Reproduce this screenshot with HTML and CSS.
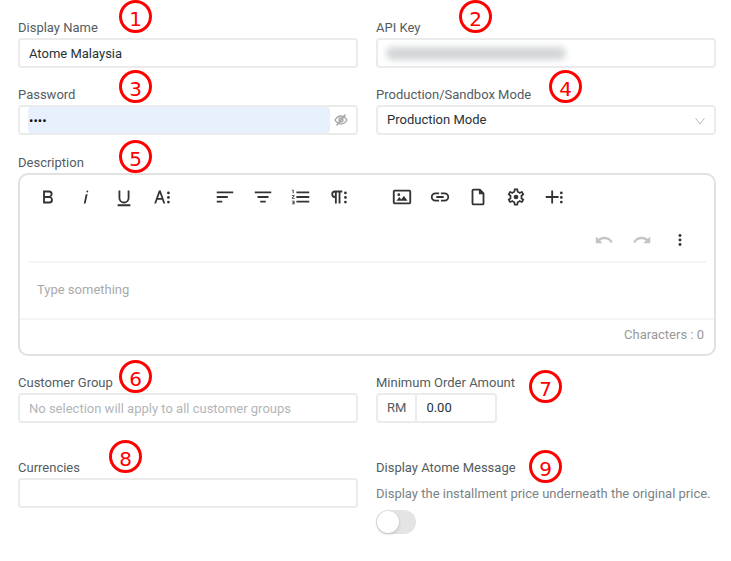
FILE: index.html
```
<!DOCTYPE html>
<html lang="en">
<head>
    <meta charset="UTF-8">
    <meta name="viewport" content="width=device-width, initial-scale=1.0">
    <title>Atome Payment Settings</title>
    <link rel="stylesheet" href="styles.css">
</head>
<body>
    <form class="settings">
        <div class="field">
            <label class="label" for="display_name">Display Name</label>
            <input class="input" type="text" id="display_name" value="Atome Malaysia">
            <span class="badge badge-name">1</span>
        </div>

        <div class="field">
            <label class="label" for="api_key">API Key</label>
            <div class="masked">
                <input class="input" type="text" id="api_key">
                <span class="smudge"></span>
            </div>
            <span class="badge badge-key">2</span>
        </div>

        <div class="field">
            <label class="label" for="password">Password</label>
            <div class="input password">
                <input class="password-input" type="password" id="password" value="pass">
                <button class="eye" type="button" aria-label="Show password">
                    <svg viewBox="0 0 14 14" width="14" height="14" fill="none" stroke="currentColor" stroke-width="1.300">
                        <path d="M1 7q2.500-4 6-4t6 4q-2.500 4-6 4t-6-4z"/>
                        <circle cx="7" cy="7" r="2"/>
                        <path d="M2.500 12.500l9-11"/>
                    </svg>
                </button>
            </div>
            <span class="badge badge-password">3</span>
        </div>

        <div class="field">
            <label class="label" for="mode">Production/Sandbox Mode</label>
            <div class="select">
                <select class="input" id="mode">
                    <option>Production Mode</option>
                    <option>Sandbox Mode</option>
                </select>
                <svg class="arrow" viewBox="0 0 10 10" width="10" height="10" fill="none" stroke="currentColor">
                    <path d="M0.500 2l4.500 6 4.500-6"/>
                </svg>
            </div>
            <span class="badge badge-mode">4</span>
        </div>

        <div class="field wide">
            <label class="label" for="description">Description</label>
            <div class="editor">
                <div class="toolbar">
                    <div class="tools">
                        <button class="tool" type="button" aria-label="Bold">
                            <svg viewBox="0 0 24 24"><path d="M15.250,11.800h0A3.680,3.680,0,0,0,17,9a3.930,3.930,0,0,0-3.860-4H6.650V19h7a3.740,3.740,0,0,0,3.700-3.780V15.100A3.640,3.640,0,0,0,15.250,11.800ZM8.650,7h4.200a2.090,2.090,0,0,1,2,1.300,2.090,2.090,0,0,1-1.370,2.610,2.230,2.230,0,0,1-.63.09H8.650Zm4.600,10H8.650V13h4.600a2.090,2.090,0,0,1,2,1.300,2.090,2.090,0,0,1-1.370,2.610A2.230,2.230,0,0,1,13.250,17Z"/></svg>
                        </button>
                        <button class="tool" type="button" aria-label="Italic">
                            <svg viewBox="0 0 24 24"><path d="M11.760,9h2l-2.200,10h-2Zm1.680-4a1,1,0,1,0,1,1,1,1,0,0,0-1-1Z"/></svg>
                        </button>
                        <button class="tool" type="button" aria-label="Underline">
                            <svg viewBox="0 0 24 24"><path d="M5 20h14v2H5zM6 5v8a6 6 0 0 0 12 0V5h-2v8a4 4 0 0 1-8 0V5z"/></svg>
                        </button>
                        <button class="tool" type="button" aria-label="More text">
                            <svg viewBox="0 0 24 24"><path d="M13.550,19h2l-5-14h-2l-5,14h2l1.400-4h5.100Zm-5.900-6,1.900-5.200L11.450,13Z"/><circle cx="19" cy="7.500" r="1.500"/><circle cx="19" cy="12.500" r="1.500"/><circle cx="19" cy="17.500" r="1.500"/></svg>
                        </button>
                    </div>
                    <div class="tools">
                        <button class="tool" type="button" aria-label="Align left">
                            <svg viewBox="0 0 24 24"><path d="M3 6h18v2H3zM3 11h12v2H3zM3 16h6v2H3z"/></svg>
                        </button>
                        <button class="tool" type="button" aria-label="Align center">
                            <svg viewBox="0 0 24 24"><path d="M3 6h18v2H3zM6 11h12v2H6zM9 16h6v2H9z"/></svg>
                        </button>
                        <button class="tool" type="button" aria-label="Ordered list">
                            <svg viewBox="0 0 24 24"><path d="M2 17h2v.5H3v1h1v.5H2v1h3v-4H2v1zm1-9h1V4H2v1h1v3zm-1 3h1.800L2 13.100v.9h3v-1H3.200L5 10.900V10H2v1zM7 6h14v2H7zM7 11h14v2H7zM7 16h14v2H7z"/></svg>
                        </button>
                        <button class="tool" type="button" aria-label="More paragraph">
                            <svg viewBox="0 0 24 24"><path d="M7.680 5a4 4 0 0 0-.110 8v6h2V7h2v12h2V7h2V5zM5.530 9a2 2 0 0 1 2-2v4a2 2 0 0 1-2-2z"/><circle cx="19" cy="7.500" r="1.500"/><circle cx="19" cy="12.500" r="1.500"/><circle cx="19" cy="17.500" r="1.500"/></svg>
                        </button>
                    </div>
                    <div class="tools">
                        <button class="tool" type="button" aria-label="Insert image">
                            <svg viewBox="0 0 24 24"><path d="M14.200,11l3.800,5H6l3-3.900l2.100,2.700L14,11zM8.500,11a1.500 1.500 0 1 0 0-3a1.500 1.500 0 0 0 0 3zM22,6v12a2 2 0 0 1-2,2H4a2 2 0 0 1-2-2V6a2 2 0 0 1 2-2h16a2 2 0 0 1 2 2zM20,6H4v12h16z"/></svg>
                        </button>
                        <button class="tool" type="button" aria-label="Insert link">
                            <svg viewBox="0 0 24 24"><path d="M11,17H7A5,5,0,0,1,7,7h4V9H7a3,3,0,0,0,0,6h4ZM17,7H13V9h4a3,3,0,0,1,0,6H13v2h4A5,5,0,0,0,17,7Zm-1,4H8v2h8Z"/></svg>
                        </button>
                        <button class="tool" type="button" aria-label="Insert file">
                            <svg viewBox="0 0 24 24"><path fill-rule="evenodd" d="M7 3a2 2 0 0 0-2 2v14a2 2 0 0 0 2 2h10a2 2 0 0 0 2-2V7.600L14.400 3zM17 19H7V5h6v4h4z"/></svg>
                        </button>
                        <button class="tool" type="button" aria-label="Settings">
                            <svg viewBox="-1 -1 26 26"><path d="M19.430 12.980c.04-.32.07-.64.07-.98s-.03-.66-.07-.98l2.110-1.650c.19-.15.24-.42.12-.64l-2-3.460c-.09-.16-.26-.25-.44-.25-.06 0-.12.01-.17.03l-2.490 1c-.52-.4-1.080-.73-1.690-.98l-.38-2.650C14.460 2.180 14.250 2 14 2h-4c-.25 0-.46.18-.49.42l-.38 2.650c-.61.25-1.170.59-1.690.98l-2.490-1c-.06-.02-.12-.03-.18-.03-.17 0-.34.09-.43.25l-2 3.460c-.13.22-.07.49.12.64l2.110 1.650c-.04.32-.07.65-.07.98s.03.66.07.98l-2.110 1.650c-.19.15-.24.42-.12.64l2 3.460c.09.16.26.25.44.25.06 0 .12-.01.17-.03l2.490-1c.52.4 1.080.73 1.690.98l.38 2.650c.03.24.24.42.49.42h4c.25 0 .46-.18.49-.42l.38-2.650c.61-.25 1.170-.59 1.690-.98l2.490 1c.06.02.12.03.18.03.17 0 .34-.09.43-.25l2-3.460c.12-.22.07-.49-.12-.64l-2.110-1.650zm-1.980-1.710c.04.31.05.52.05.73 0 .21-.02.43-.05.73l-.14 1.130.89.7 1.080.84-.7 1.210-1.270-.51-1.040-.42-.9.68c-.43.32-.84.56-1.250.73l-1.060.43-.16 1.130-.2 1.350h-1.400l-.19-1.350-.16-1.130-1.060-.43c-.43-.18-.83-.41-1.230-.71l-.91-.7-1.060.43-1.270.51-.7-1.210 1.080-.84.89-.7-.14-1.130c-.03-.31-.05-.54-.05-.74s.02-.43.05-.73l.14-1.130-.89-.7-1.080-.84.7-1.210 1.270.51 1.040.42.9-.68c.43-.32.84-.56 1.250-.73l1.060-.43.16-1.130.2-1.350h1.390l.19 1.350.16 1.130 1.060.43c.43.18.83.41 1.230.71l.91.7 1.060-.43 1.270-.51.7 1.210-1.070.85-.89.7.14 1.130z"/><circle cx="12" cy="12" r="2.800"/></svg>
                        </button>
                        <button class="tool" type="button" aria-label="More rich content">
                            <svg viewBox="0 0 24 24"><path d="M9 5h2v6h6v2h-6v6H9v-6H3v-2h6z"/><circle cx="20" cy="7.500" r="1.500"/><circle cx="20" cy="12.500" r="1.500"/><circle cx="20" cy="17.500" r="1.500"/></svg>
                        </button>
                    </div>
                    <div class="tools tools-right">
                        <button class="tool" type="button" aria-label="Undo" disabled>
                            <svg viewBox="0 0 24 24"><path d="M13 8.500c-2.700 0-5 .7-7 2.200L3 8.500v7h7.500l-2.700-2.800c1.500-1 3.200-1.500 5.200-1.500 3 0 5.200 1.600 6.500 4l2-.8C19.900 10.800 17 8.500 13 8.500z"/></svg>
                        </button>
                        <button class="tool" type="button" aria-label="Redo" disabled>
                            <svg viewBox="0 0 24 24"><path d="M11 8.500c2.700 0 5 .7 7 2.200l3-2.200v7h-7.500l2.700-2.800c-1.500-1-3.200-1.500-5.200-1.500-3 0-5.200 1.600-6.500 4l-2-.8C4.100 10.800 7 8.500 11 8.500z"/></svg>
                        </button>
                        <button class="tool" type="button" aria-label="More">
                            <svg viewBox="0 0 24 24"><circle cx="12" cy="7" r="1.600"/><circle cx="12" cy="12" r="1.600"/><circle cx="12" cy="17" r="1.600"/></svg>
                        </button>
                    </div>
                </div>
                <textarea class="content" id="description" rows="1" placeholder="Type something"></textarea>
                <div class="counter">Characters : 0</div>
            </div>
            <span class="badge badge-description">5</span>
        </div>

        <div class="field">
            <label class="label" for="customer_group">Customer Group</label>
            <input class="input" type="text" id="customer_group" placeholder="No selection will apply to all customer groups">
            <span class="badge badge-group">6</span>
        </div>

        <div class="field">
            <label class="label" for="min_amount">Minimum Order Amount</label>
            <div class="input amount">
                <span class="currency">RM</span>
                <input class="amount-input" type="text" id="min_amount" value="0.00">
            </div>
            <span class="badge badge-amount">7</span>
        </div>

        <div class="field last">
            <label class="label" for="currencies">Currencies</label>
            <input class="input" type="text" id="currencies">
            <span class="badge badge-currencies">8</span>
        </div>

        <div class="field last">
            <label class="label" for="message">Display Atome Message</label>
            <p class="help">Display the installment price underneath the original price.</p>
            <input class="switch" type="checkbox" id="message">
            <span class="badge badge-message">9</span>
        </div>
    </form>
</body>
</html>
```
FILE: styles.css
```
* {
    box-sizing: border-box;
}

body, input, select, textarea, button {
    font-family: Roboto, 'Liberation Sans', sans-serif;
    font-size: 13px;
    line-height: 20px;
}

body {
    margin: 0;
    color: #535c61;
    background-color: #fff;
}

button {
    padding: 0;
    border: 0;
    background: none;
    cursor: pointer;
}

.settings {
    display: grid;
    grid-template-columns: 1fr 1fr;
    gap: 17px 18px;
    padding: 18px 15px 24px 18px;
}

.field {
    position: relative;
    min-width: 0;
}

.wide {
    grid-column: 1 / -1;
    margin-top: 1px;
}

.last {
    margin-top: 18px;
}

.label {
    display: block;
}

.input {
    display: block;
    width: 100%;
    height: 30px;
    padding: 0 9px;
    border: 2px solid #ebebeb;
    border-radius: 4px;
    color: #263238;
    background-color: #fff;
    outline: none;
}

::placeholder {
    color: #b2b6b8;
    opacity: 1;
}

/* API key is hidden behind a smudge */
.masked, .select {
    position: relative;
}

.smudge {
    position: absolute;
    top: 9px;
    left: 10px;
    width: 180px;
    height: 13px;
    border-radius: 6px;
    background-color: #d3d6d8;
    filter: blur(3px);
}

.password {
    display: flex;
    align-items: center;
    padding: 0 8px;
}

.password-input {
    flex: 1;
    min-width: 0;
    height: 26px;
    padding: 0 1px;
    border: 0;
    border-radius: 3px;
    color: #111;
    background-color: #e8f0fe;
    outline: none;
}

.eye {
    display: flex;
    margin-left: 4px;
    color: #a5a5a5;
}

select.input {
    appearance: none;
}

.arrow {
    position: absolute;
    top: 11px;
    right: 11px;
    color: #bbb;
    pointer-events: none;
}

.editor {
    border: 2px solid #e1e1e1;
    border-radius: 10px;
}

.toolbar {
    display: flex;
    flex-wrap: wrap;
    column-gap: 25px;
    margin: 0 8px;
    padding-left: 1px;
    border-bottom: 2px solid #f5f5f5;
}

.tools {
    display: flex;
}

.tools-right {
    flex-basis: 100%;
    justify-content: flex-end;
    padding-right: 7px;
}

.tool {
    display: flex;
    align-items: center;
    justify-content: center;
    width: 38px;
    height: 43px;
    color: #333;
}

.tool svg {
    width: 22px;
    height: 22px;
    fill: currentColor;
}

.tool:disabled {
    color: #c4c4c4;
}

.content {
    display: block;
    width: 100%;
    height: 55px;
    padding: 17px;
    border: 0;
    resize: none;
    background: none;
    outline: none;
}

.content::placeholder {
    color: #aaa;
}

.counter {
    padding: 5px 10px 9px;
    border-top: 2px solid #f5f5f5;
    color: #999;
    text-align: right;
}

.amount {
    display: flex;
    width: 121px;
    padding: 0;
}

.currency {
    padding: 3px 9px;
    border-right: 2px solid #ebebeb;
    color: #535c61;
}

.amount-input {
    flex: 1;
    min-width: 0;
    padding: 0 9px;
    border: 0;
    color: #263238;
    background: none;
    outline: none;
}

.help {
    margin: 6px 0;
    color: #7a8285;
}

.switch {
    display: block;
    width: 40px;
    height: 24px;
    margin: 0;
    border-radius: 12px;
    appearance: none;
    background-color: #e4e4e4;
    cursor: pointer;
}

.switch::before {
    content: '';
    display: block;
    width: 22px;
    height: 22px;
    margin: 1px;
    border-radius: 50%;
    background-color: #fff;
    box-shadow: 0 1px 3px #0003;
}

.switch:checked {
    background-color: #16c;
}

.switch:checked::before {
    margin-left: 17px;
}

/* Numbered markers that lie over the form */
.badge {
    position: absolute;
    width: 33px;
    height: 33px;
    padding-top: 3px;
    border: 3px solid #f00;
    border-radius: 50%;
    color: #f00;
    font-family: 'DejaVu Sans', sans-serif;
    font-size: 20px;
    line-height: 27px;
    text-align: center;
    pointer-events: none;
}

.badge-name {
    top: -18px;
    left: 101px;
}

.badge-key {
    top: -18px;
    left: 83px;
}

.badge-password {
    top: -15px;
    left: 101px;
}

.badge-mode {
    top: -15px;
    left: 173px;
}

.badge-description {
    top: -13px;
    left: 101px;
}

.badge-group {
    top: -13px;
    left: 101px;
}

.badge-amount {
    top: -3px;
    left: 153px;
}

.badge-currencies {
    top: -18px;
    left: 91px;
}

.badge-message {
    top: -8px;
    left: 153px;
}
```
